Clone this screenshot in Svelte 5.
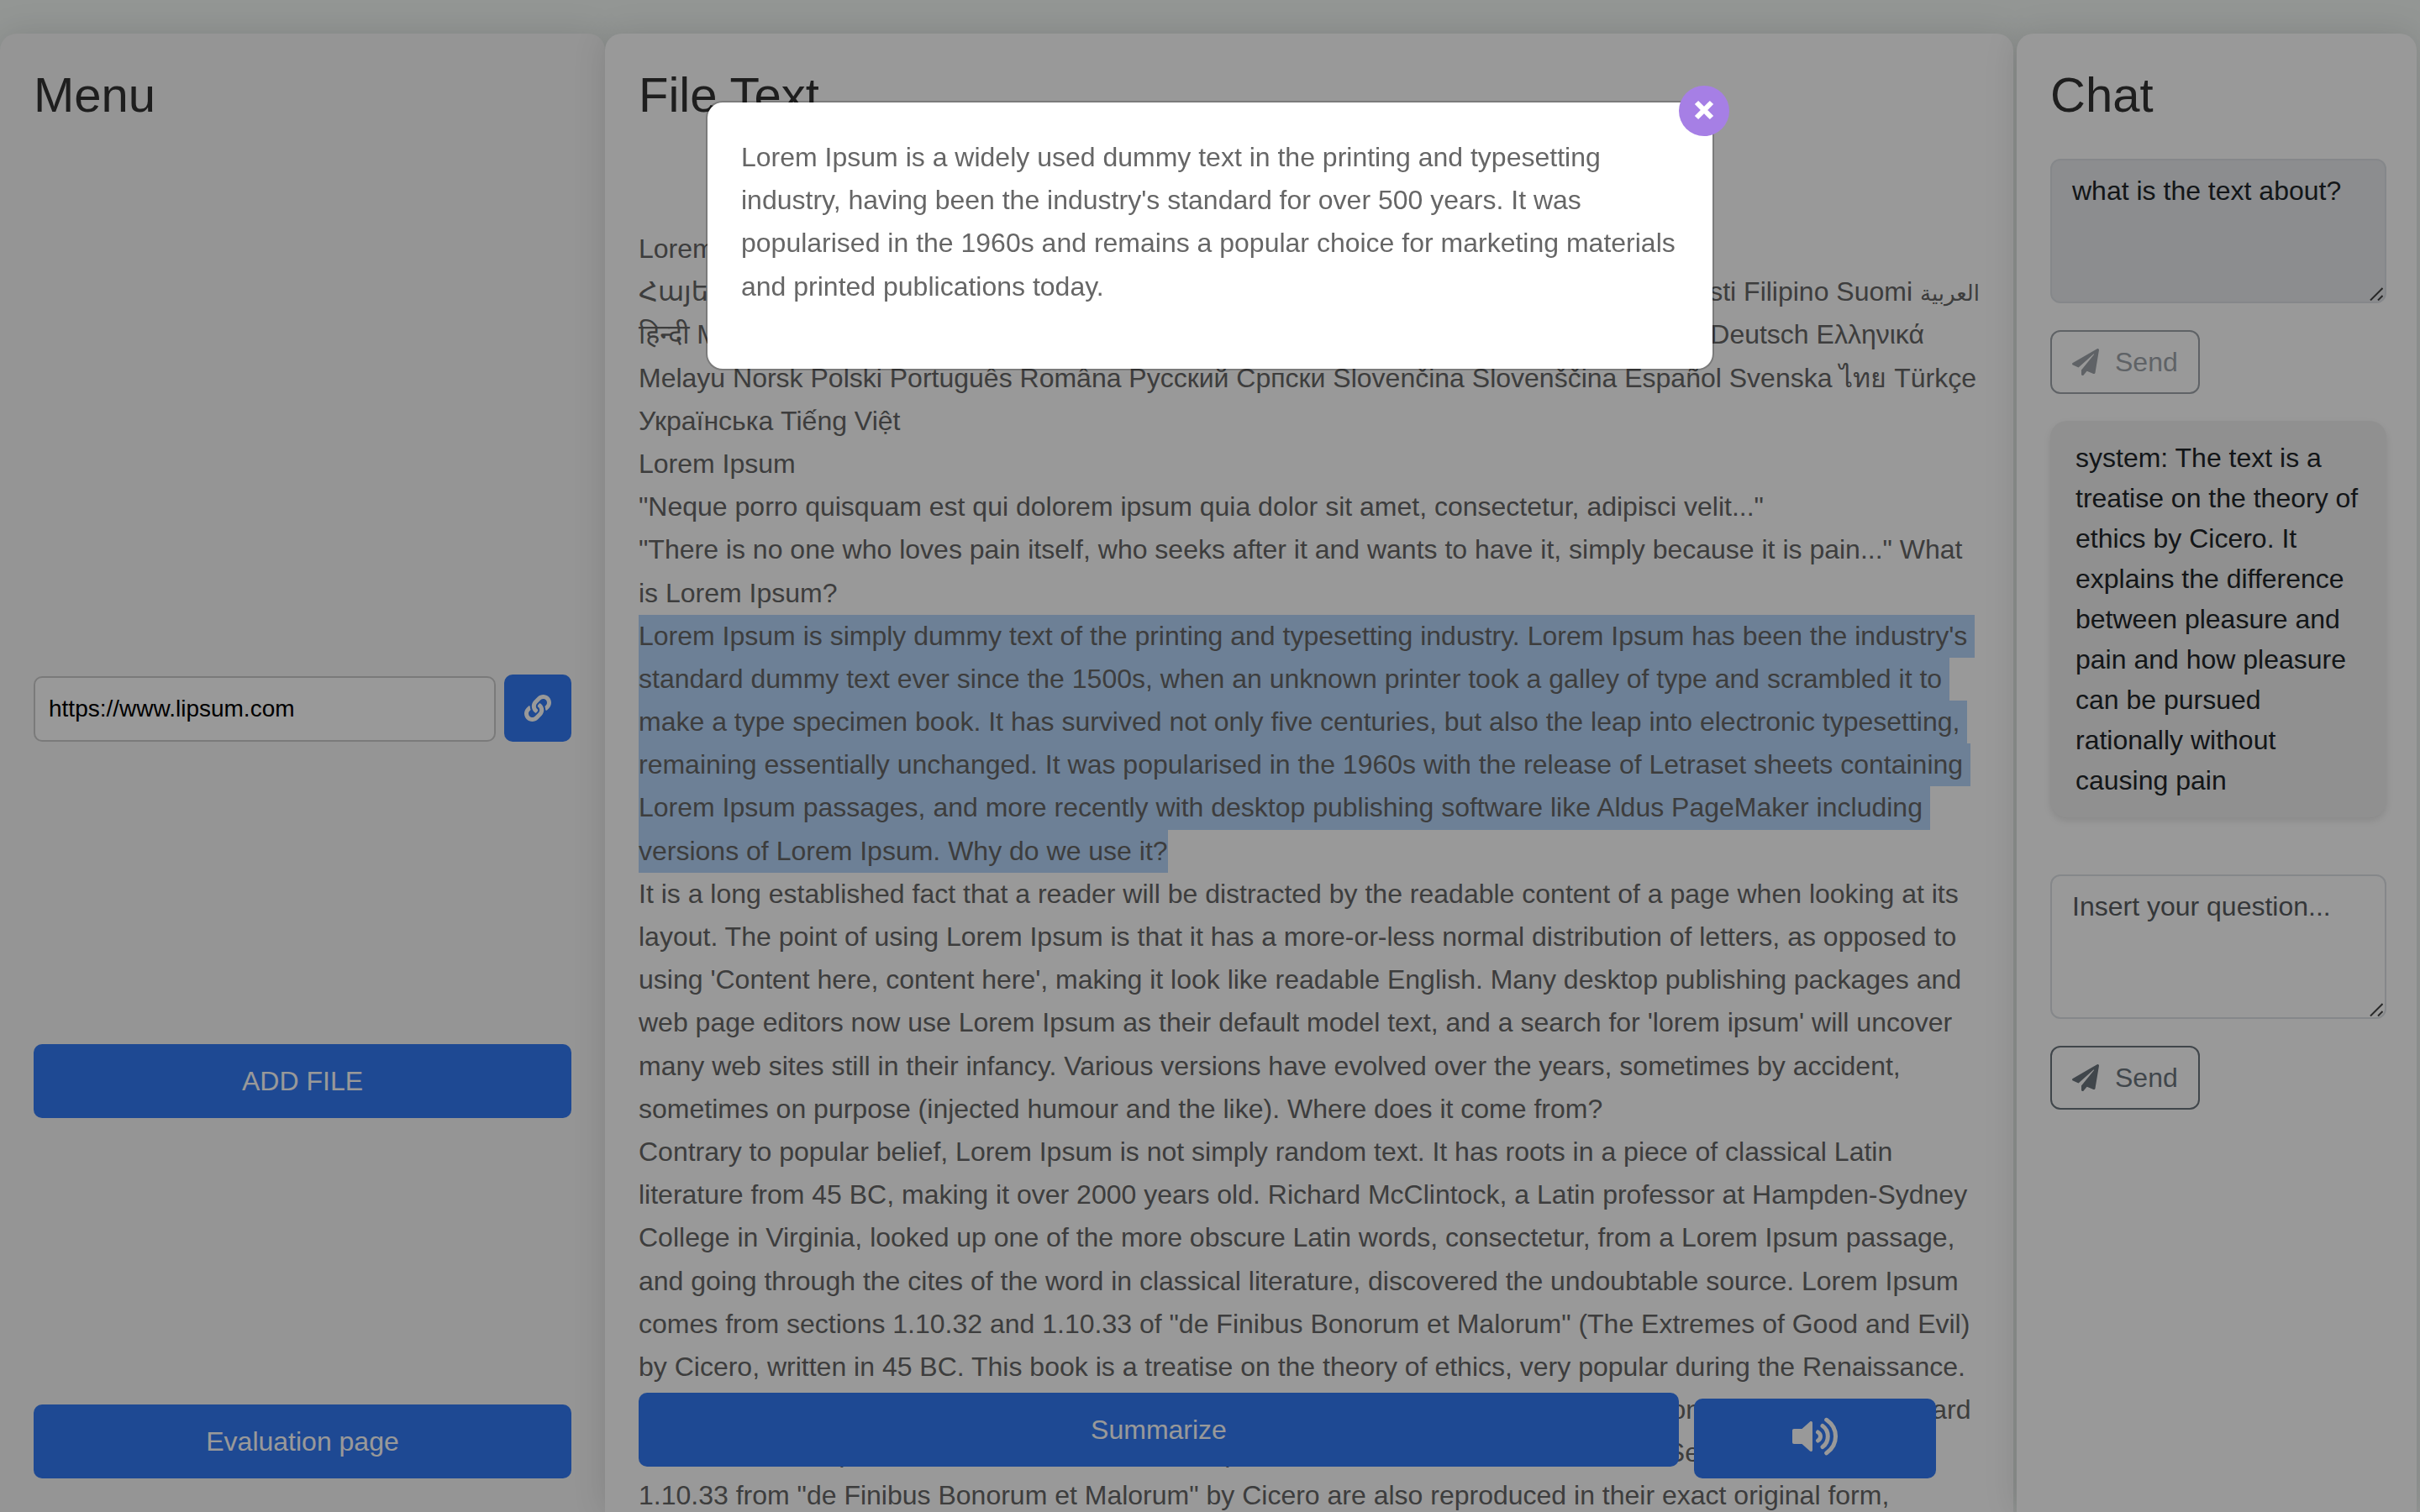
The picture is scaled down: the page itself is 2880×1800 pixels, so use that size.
<script>
  let url = $state('https://www.lipsum.com');
  let asked = $state('what is the text about?');
  let question = $state('');

  const selected = [
    "Lorem Ipsum is simply dummy text of the printing and typesetting industry. Lorem Ipsum has been the industry's",
    'standard dummy text ever since the 1500s, when an unknown printer took a galley of type and scrambled it to',
    'make a type specimen book. It has survived not only five centuries, but also the leap into electronic typesetting,',
    'remaining essentially unchanged. It was popularised in the 1960s with the release of Letraset sheets containing',
    'Lorem Ipsum passages, and more recently with desktop publishing software like Aldus PageMaker including',
    'versions of Lorem Ipsum. Why do we use it?'
  ];
</script>

{#snippet plane()}
  <svg class="plane" viewBox="0 0 512 512" aria-hidden="true"><path d="M476 3.2L12.5 270.6c-18.1 10.4-15.8 35.6 2.2 43.2L121 358.4l287.3-253.2c5.5-4.9 13.3 2.6 8.6 8.3L176 407v80.5c0 23.6 28.5 32.9 42.5 15.8L282 426l124.6 52.2c14.2 6 30.4-2.9 33-18.2l72-432C515 7.8 493.3-6.8 476 3.2z" /></svg>
{/snippet}

{#snippet grip()}
  <svg class="grip" viewBox="0 0 16 16" aria-hidden="true"><path d="M1 15.500L15.500 1M10 15.500L15.500 10" /></svg>
{/snippet}

<div class="page">
  <section class="panel menu">
    <h1>Menu</h1>
    <form class="url" onsubmit={(e) => e.preventDefault()}>
      <input type="text" aria-label="Page address" bind:value={url} />
      <button class="primary link" aria-label="Load link">
        <svg viewBox="0 0 512 512" aria-hidden="true"><path d="M326.612 185.391c59.747 59.809 58.927 155.698.36 214.59-.11.12-.24.25-.36.37l-67.2 67.2c-59.27 59.27-155.699 59.262-214.96 0-59.27-59.26-59.27-155.7 0-214.96l37.106-37.106c9.84-9.84 26.786-3.3 27.294 10.606.648 17.722 3.826 35.527 9.69 52.721 1.986 5.822.567 12.262-3.783 16.612l-13.087 13.087c-28.026 28.026-28.905 73.66-1.155 101.96 28.024 28.579 74.086 28.749 102.325.51l67.2-67.19c28.191-28.191 28.073-73.757 0-101.83-3.701-3.694-7.429-6.564-10.341-8.569a16.037 16.037 0 0 1-6.947-12.606c-.396-10.567 3.348-21.456 11.698-29.806l21.054-21.055c5.521-5.521 14.182-6.199 20.584-1.731a152.482 152.482 0 0 1 20.522 17.197zM467.547 44.449c-59.261-59.262-155.69-59.27-214.96 0l-67.2 67.2c-.12.12-.25.25-.36.37-58.566 58.892-59.387 154.781.36 214.59a152.454 152.454 0 0 0 20.521 17.196c6.402 4.468 15.064 3.789 20.584-1.731l21.054-21.055c8.35-8.35 12.094-19.239 11.698-29.806a16.037 16.037 0 0 0-6.947-12.606c-2.912-2.005-6.64-4.875-10.341-8.569-28.073-28.073-28.191-73.639 0-101.83l67.2-67.19c28.239-28.239 74.3-28.069 102.325.51 27.75 28.3 26.872 73.934-1.155 101.96l-13.087 13.087c-4.35 4.35-5.769 10.79-3.783 16.612 5.864 17.194 9.042 34.999 9.69 52.721.509 13.906 17.454 20.446 27.294 10.606l37.106-37.106c59.271-59.259 59.271-155.699.001-214.959z" /></svg>
      </button>
    </form>
    <button class="primary">ADD FILE</button>
    <a class="primary" href="#evaluation">Evaluation page</a>
  </section>

  <section class="panel file">
    <h1>File Text</h1>
    <div class="text">
      <p>Lorem Ipsum</p>
      <p class="languages"><span>Հայերեն Shqip Български</span><span>Català Hrvatski Česky Dansk</span><span>Nederlands English Eesti Filipino Suomi <bdi class="arabic">العربية</bdi></span></p>
      <p class="line">हिन्दी Magyar Indonesia Italiano Latviski Lietuviškai македонски <bdi class="hebrew">עברית</bdi> Français ქართული Deutsch Ελληνικά</p>
      <p>Melayu Norsk Polski Português Româna Pyccкий Српски Slovenčina Slovenščina Español Svenska ไทย Türkçe Українська Tiếng Việt</p>
      <p>Lorem Ipsum</p>
      <p>"Neque porro quisquam est qui dolorem ipsum quia dolor sit amet, consectetur, adipisci velit..."</p>
      <p>"There is no one who loves pain itself, who seeks after it and wants to have it, simply because it is pain..." What is Lorem Ipsum?</p>
      <p class="selection">
        {#each selected as line}<span>{line}</span>{/each}
      </p>
      <p>It is a long established fact that a reader will be distracted by the readable content of a page when looking at its layout. The point of using Lorem Ipsum is that it has a more-or-less normal distribution of letters, as opposed to using 'Content here, content here', making it look like readable English. Many desktop publishing packages and web page editors now use Lorem Ipsum as their default model text, and a search for 'lorem ipsum' will uncover many web sites still in their infancy. Various versions have evolved over the years, sometimes by accident, sometimes on purpose (injected humour and the like). Where does it come from?</p>
      <p>Contrary to popular belief, Lorem Ipsum is not simply random text. It has roots in a piece of classical Latin literature from 45 BC, making it over 2000 years old. Richard McClintock, a Latin professor at Hampden-Sydney College in Virginia, looked up one of the more obscure Latin words, consectetur, from a Lorem Ipsum passage, and going through the cites of the word in classical literature, discovered the undoubtable source. Lorem Ipsum comes from sections 1.10.32 and 1.10.33 of "de Finibus Bonorum et Malorum" (The Extremes of Good and Evil) by Cicero, written in 45 BC. This book is a treatise on the theory of ethics, very popular during the Renaissance. The first line of Lorem Ipsum, "Lorem ipsum dolor sit amet..", comes from a line in section 1.10.32. The standard chunk of Lorem Ipsum used since the 1500s is reproduced below for those interested. Sections 1.10.32 and 1.10.33 from "de Finibus Bonorum et Malorum" by Cicero are also reproduced in their exact original form,</p>
    </div>
    <div class="actions">
      <button class="primary summarize">Summarize</button>
      <button class="primary speak" aria-label="Read aloud">
        <svg viewBox="0 -1 54 46" aria-hidden="true">
          <path class="solid" d="M2 13h9.500l9.500-8.500c1.200-1 3-.3 3 1.300v32.400c0 1.600-1.800 2.300-3 1.300L11.500 31H2c-1.200 0-2-.8-2-2V15c0-1.200.8-2 2-2z" />
          <path d="M30.500 17c4 2.500 4 7.500 0 10M36 9.500c8.400 6 8.400 19 0 25M40.700 2.300c14.400 10 14.400 29.500 0 39.500" />
        </svg>
      </button>
    </div>
  </section>

  <section class="panel chat">
    <h1>Chat</h1>
    <form class="ask" onsubmit={(e) => e.preventDefault()}>
      <div class="field">
        <textarea rows="3" aria-label="Asked question" disabled bind:value={asked}></textarea>
        {@render grip()}
      </div>
      <button class="send" disabled>{@render plane()}Send</button>
    </form>
    <p class="bubble">system: The text is a treatise on the theory of ethics by Cicero. It explains the difference between pleasure and pain and how pleasure can be pursued rationally without causing pain</p>
    <form class="ask" onsubmit={(e) => e.preventDefault()}>
      <div class="field">
        <textarea rows="3" aria-label="Question" placeholder="Insert your question..." bind:value={question}></textarea>
        {@render grip()}
      </div>
      <button class="send">{@render plane()}Send</button>
    </form>
  </section>
</div>

<div class="backdrop">
  <div class="modal" role="dialog" aria-label="Summary">
    <button class="close" aria-label="Close">
      <svg viewBox="0 0 24 24" aria-hidden="true"><path d="M3 3l18 18M21 3L3 21" /></svg>
    </button>
    <p>Lorem Ipsum is a widely used dummy text in the printing and typesetting industry, having been the industry's standard for over 500 years. It was popularised in the 1960s and remains a popular choice for marketing materials and printed publications today.</p>
  </div>
</div>

<style>
  :global(body) {
    background: #f5faf7;
  }

  .page,
  .backdrop {
    font-family: 'Liberation Sans', Arial, 'Noto Sans', 'DejaVu Sans', sans-serif;
    font-size: 32px;
  }

  .page *,
  .backdrop * {
    box-sizing: border-box;
  }

  .page {
    box-sizing: border-box;
    display: grid;
    grid-template-columns: 3fr 7fr 2fr;
    height: 100vh;
    padding-top: 40px;
    overflow: hidden;
  }

  .panel {
    position: relative;
    min-width: 0;
    padding: 40px;
    border-radius: 20px 20px 0 0;
    background: #fff;
    box-shadow: 0 0 40px rgba(0, 0, 0, 0.12);
  }

  h1 {
    margin: 0;
    color: #333;
    font-size: 58px;
    font-weight: 400;
    line-height: 66px;
  }

  p {
    margin: 0;
  }

  button,
  input,
  textarea {
    font-family: inherit;
  }

  .primary {
    display: flex;
    align-items: center;
    justify-content: center;
    height: 88px;
    padding: 0;
    border: 0;
    border-radius: 10px;
    background: #337bf5;
    color: #fff;
    font-size: 32px;
    text-decoration: none;
  }

  .menu {
    display: flex;
    flex-direction: column;
    justify-content: space-between;
    background: #f8f8f8;
  }

  .url {
    display: flex;
    align-items: flex-end;
    gap: 10px;
    padding: 316px 0 19px;
  }

  .url input {
    flex: 1;
    min-width: 0;
    height: 78px;
    padding: 0 16px;
    border: 2px solid #ccc;
    border-radius: 10px;
    background: #fff;
    color: #000;
    font-size: 28px;
  }

  .link {
    width: 80px;
    height: 80px;
  }

  .link svg {
    width: 32px;
    height: 32px;
    fill: #fff;
  }

  .file,
  .chat {
    margin-right: 4px;
  }

  .file {
    overflow: hidden;
  }

  .text {
    margin-top: 125px;
    color: #666;
    line-height: 1.6;
  }

  .languages {
    display: flex;
    justify-content: space-between;
    white-space: nowrap;
  }

  .line {
    white-space: nowrap;
  }

  .arabic {
    font-size: 26px;
  }

  .hebrew {
    font-size: 28px;
  }

  .selection span {
    display: block;
    width: fit-content;
    padding-right: 9px;
    background: #b6d6fb;
    white-space: nowrap;
  }

  .selection span:last-child {
    padding-right: 0;
  }

  .actions {
    position: absolute;
    right: 92px;
    bottom: 40px;
    left: 40px;
    display: flex;
    align-items: flex-end;
    gap: 18px;
  }

  .summarize {
    flex: 1;
    margin-bottom: 14px;
  }

  .speak {
    width: 288px;
    height: 95px;
    padding-bottom: 6px;
  }

  .speak svg {
    width: 54px;
    height: 46px;
    fill: none;
    stroke: #fff;
    stroke-width: 5;
    stroke-linecap: round;
  }

  .speak .solid {
    fill: #fff;
    stroke: none;
  }

  .chat {
    padding-right: 36px;
  }

  .chat h1 {
    margin-bottom: 43px;
  }

  .field {
    position: relative;
    display: flex;
    margin-bottom: 32px;
  }

  textarea {
    width: 100%;
    padding: 12px 24px;
    border: 2px solid #dee2e6;
    border-radius: 12px;
    background: #fff;
    color: #212529;
    font-size: 32px;
    line-height: 48px;
    resize: none;
    overflow: hidden;
  }

  textarea:disabled {
    background: #e9ecef;
  }

  textarea::placeholder {
    color: #595c5f;
  }

  .grip {
    position: absolute;
    right: 4px;
    bottom: 3px;
    width: 16px;
    height: 16px;
    fill: none;
    stroke: #444;
    stroke-width: 2;
  }

  .send {
    display: flex;
    align-items: center;
    gap: 19px;
    padding: 12px 24px;
    border: 2px solid #6c757d;
    border-radius: 12px;
    background: transparent;
    color: #6c757d;
    font-size: 32px;
    line-height: 48px;
  }

  .send:disabled {
    opacity: 0.65;
  }

  .plane {
    width: 32px;
    height: 32px;
    fill: currentColor;
  }

  .bubble {
    margin: 32px 0 68px;
    padding: 20px 30px;
    border-radius: 20px;
    background: #f0f0f0;
    box-shadow: 0 4px 8px rgba(0, 0, 0, 0.1);
    color: #212529;
    line-height: 48px;
  }

  .backdrop {
    position: fixed;
    inset: 0;
    display: flex;
    align-items: flex-start;
    justify-content: center;
    padding-top: 120px;
    background: rgba(0, 0, 0, 0.4);
  }

  .modal {
    position: relative;
    width: 1200px;
    padding: 40px 40px 72px;
    border: 2px solid rgba(0, 0, 0, 0.2);
    border-radius: 20px;
    background: #fff;
    background-clip: padding-box;
    color: #666;
    line-height: 1.6;
  }

  .close {
    position: absolute;
    top: -20px;
    right: -20px;
    display: flex;
    align-items: center;
    justify-content: center;
    width: 60px;
    height: 60px;
    padding: 0 0 2px;
    border: 0;
    border-radius: 50%;
    background: #a67fe5;
  }

  .close svg {
    width: 24px;
    height: 24px;
    fill: none;
    stroke: #fff;
    stroke-width: 6;
  }
</style>
